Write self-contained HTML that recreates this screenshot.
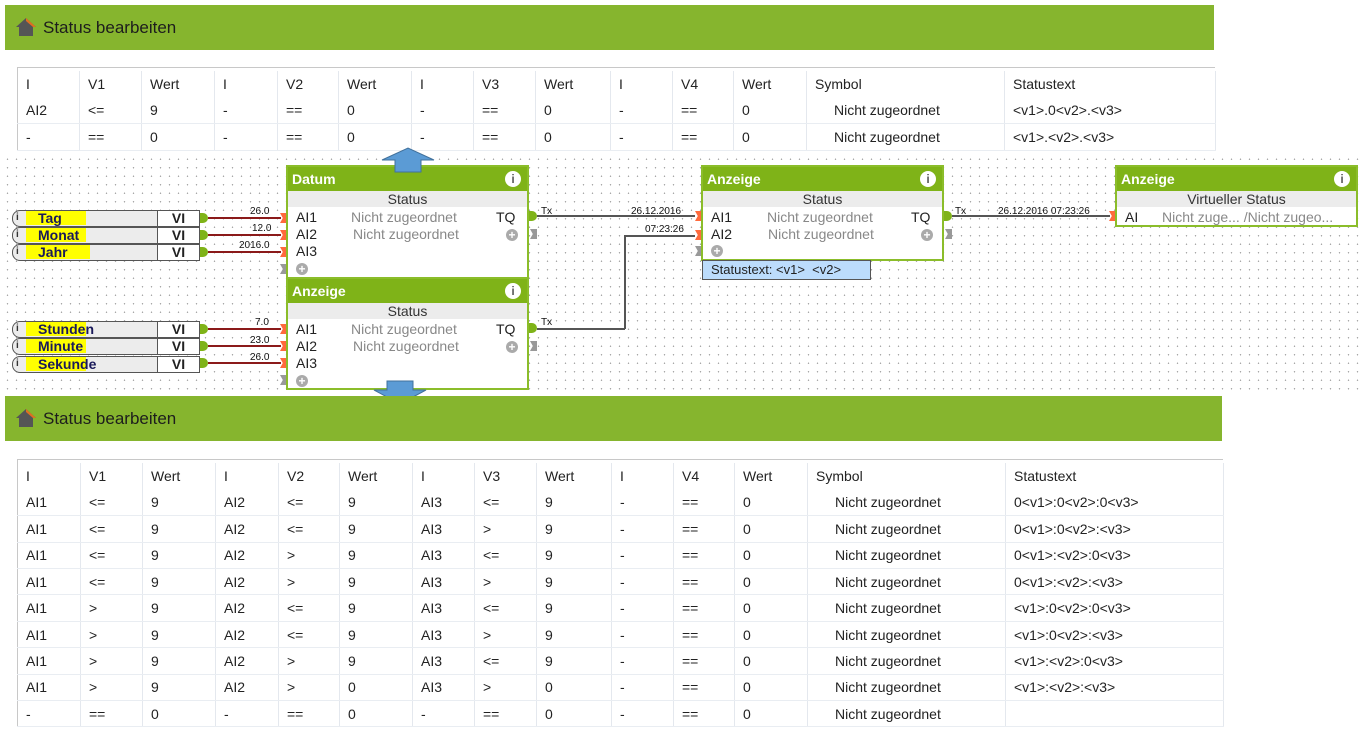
<!DOCTYPE html>
<html><head><meta charset="utf-8"><style>
*{margin:0;padding:0;box-sizing:border-box}
body{width:1368px;height:731px;background:#fff;position:relative;overflow:hidden;font-family:"Liberation Sans",sans-serif;color:#222}
.hdr{position:absolute;background:#86b52e;height:45px;font-size:17px;color:#1d1d1d;padding-left:38px;line-height:45px}
.hdr svg{position:absolute;left:10px;top:12px}
table{position:absolute;border-collapse:collapse;table-layout:fixed;font-size:14px}
td{height:26.4px;padding:0 0 0 8px;border-right:1px solid #e4e8ee;border-bottom:1px solid #e9edf2;white-space:nowrap;overflow:hidden}
tr:first-child td{border-bottom:none}
td.s{padding-left:27px}
.tb{position:absolute;border-top:1px solid #c8c8c8;border-left:1px solid #c8c8c8}
.cv{position:absolute;left:0;top:152px;width:1360px;height:243px;background-color:#fff;background-image:radial-gradient(circle,#a8a8a8 0.6px,transparent 0.9px);background-size:9px 8.5px;background-position:3px 3px}
.blk{position:absolute;border:2px solid #8bbd2a;background:#fff;font-size:14px}
.bh{background:#7fb318;color:#fff;font-weight:bold;height:24px;line-height:24px;padding-left:4px;font-size:14px;position:relative;font-family:"Liberation Sans Narrow","Liberation Sans",sans-serif}
.bh i{position:absolute;right:6px;top:4px;width:16px;height:16px;border-radius:50%;background:#fff;color:#5c5c5c;font-style:normal;font-size:12px;line-height:16px;text-align:center}
.st{background:#ececec;text-align:center;height:16px;line-height:16px;color:#333}
.r{position:absolute;font-size:14px;line-height:17px}
.g{color:#888}
.pl{position:absolute;width:12px;height:12px;border-radius:50%;background:#aaa;color:#fff;font-size:12px;line-height:12px;text-align:center;font-weight:bold}
.in{position:absolute;height:17px;border:1.5px solid #555;border-radius:8px 0 0 8px;background:#ececec;font-size:14px;font-weight:bold;line-height:14px;font-family:"Liberation Sans Narrow","Liberation Sans",sans-serif}
.in .y{position:absolute;left:13px;top:0;height:14px;background:#ff0;padding-left:12px;color:#1a1a5a}
.in .ii{position:absolute;left:3px;top:0;font-size:10px;color:#333}
.in .vi{position:absolute;left:144px;top:-1.5px;width:43px;height:17px;border:1.5px solid #555;background:#fff;text-align:center;line-height:14px}
.gd{position:absolute;width:8px;height:10px;background:#7fb318;border-radius:0 5px 5px 0}
.od{position:absolute;width:7px;height:10px;background:#ff6a3d;clip-path:polygon(0 0,100% 0,100% 100%,0 100%,40% 50%)}
.gy{position:absolute;width:7px;height:10px;background:#999;clip-path:polygon(0 0,100% 0,100% 100%,0 100%,40% 50%)}
.lab{position:absolute;font-size:10px;line-height:10px;font-family:"Liberation Sans Narrow","Liberation Sans",sans-serif;color:#111}
.ln{position:absolute;height:2px;background:#8b1a1a}
.k{position:absolute;background:#555}
</style></head><body>

<div class="hdr" style="left:5px;top:5px;width:1209px"><svg width="22" height="20" viewBox="0 0 22 20"><path d="M11 1 L21 10 L18 10 L18 19 L4 19 L4 10 L1 10 Z" fill="#555"/><path d="M11 1 L21 10 L18 10 L11 4 Z" fill="#e07020"/></svg>Status bearbeiten</div>

<div class="tb" style="left:17px;top:67px;width:1198px;height:4px"></div>
<table style="left:17px;top:71px;width:1198px;border-left:1px solid #c8c8c8">
<colgroup><col style="width:62px"><col style="width:62px"><col style="width:73px"><col style="width:63px"><col style="width:61px"><col style="width:73px"><col style="width:62px"><col style="width:62px"><col style="width:75px"><col style="width:62px"><col style="width:61px"><col style="width:73px"><col style="width:198px"><col style="width:211px"></colgroup>
<tr><td>I</td><td>V1</td><td>Wert</td><td>I</td><td>V2</td><td>Wert</td><td>I</td><td>V3</td><td>Wert</td><td>I</td><td>V4</td><td>Wert</td><td>Symbol</td><td>Statustext</td></tr>
<tr><td>AI2</td><td>&lt;=</td><td>9</td><td>-</td><td>==</td><td>0</td><td>-</td><td>==</td><td>0</td><td>-</td><td>==</td><td>0</td><td class="s">Nicht zugeordnet</td><td>&lt;v1&gt;.0&lt;v2&gt;.&lt;v3&gt;</td></tr>
<tr><td>-</td><td>==</td><td>0</td><td>-</td><td>==</td><td>0</td><td>-</td><td>==</td><td>0</td><td>-</td><td>==</td><td>0</td><td class="s">Nicht zugeordnet</td><td>&lt;v1&gt;.&lt;v2&gt;.&lt;v3&gt;</td></tr>
</table>

<div class="cv"></div>

<div class="in" style="left:12px;top:210px;width:146px"><span class="ii">i</span><span class="y" style="width:60px">Tag</span><span class="vi">VI</span></div>
<div class="in" style="left:12px;top:227px;width:146px"><span class="ii">i</span><span class="y" style="width:60px">Monat</span><span class="vi">VI</span></div>
<div class="in" style="left:12px;top:244px;width:146px"><span class="ii">i</span><span class="y" style="width:64px">Jahr</span><span class="vi">VI</span></div>
<div class="in" style="left:12px;top:321px;width:146px"><span class="ii">i</span><span class="y" style="width:60px">Stunden</span><span class="vi">VI</span></div>
<div class="in" style="left:12px;top:338px;width:146px"><span class="ii">i</span><span class="y" style="width:60px">Minute</span><span class="vi">VI</span></div>
<div class="in" style="left:12px;top:356px;width:146px"><span class="ii">i</span><span class="y" style="width:60px">Sekunde</span><span class="vi">VI</span></div>

<div class="gd" style="left:200px;top:213px"></div><div class="gd" style="left:200px;top:230px"></div><div class="gd" style="left:200px;top:247px"></div>
<div class="gd" style="left:200px;top:324px"></div><div class="gd" style="left:200px;top:341px"></div><div class="gd" style="left:200px;top:358px"></div>
<div class="ln" style="left:208px;top:217px;width:73px"></div><div class="ln" style="left:208px;top:234px;width:73px"></div><div class="ln" style="left:208px;top:251px;width:73px"></div>
<div class="ln" style="left:208px;top:328px;width:73px"></div><div class="ln" style="left:208px;top:345px;width:73px"></div><div class="ln" style="left:208px;top:362px;width:73px"></div>
<div class="lab" style="left:250px;top:207px">26.0</div><div class="lab" style="left:252px;top:224px">12.0</div><div class="lab" style="left:239px;top:241px">2016.0</div>
<div class="lab" style="left:255px;top:318px">7.0</div><div class="lab" style="left:250px;top:336px">23.0</div><div class="lab" style="left:250px;top:353px">26.0</div>
<div class="od" style="left:280px;top:213px"></div><div class="od" style="left:280px;top:230px"></div><div class="od" style="left:280px;top:247px"></div><div class="gy" style="left:280px;top:264px"></div>
<div class="od" style="left:280px;top:324px"></div><div class="od" style="left:280px;top:341px"></div><div class="od" style="left:280px;top:358px"></div><div class="gy" style="left:280px;top:375px"></div>

<div class="blk" style="left:286px;top:165px;width:243px;height:114px"><div class="bh">Datum<i>i</i></div><div class="st">Status</div>
<div class="r" style="left:8px;top:42px">AI1</div><div class="r g" style="left:63px;top:42px">Nicht zugeordnet</div><div class="r" style="left:208px;top:42px">TQ</div>
<div class="r" style="left:8px;top:59px">AI2</div><div class="r g" style="left:65px;top:59px">Nicht zugeordnet</div><div class="pl" style="left:218px;top:62px">+</div>
<div class="r" style="left:8px;top:76px">AI3</div><div class="pl" style="left:8px;top:96px">+</div></div>

<div class="blk" style="left:286px;top:277px;width:243px;height:113px"><div class="bh">Anzeige<i>i</i></div><div class="st">Status</div>
<div class="r" style="left:8px;top:42px">AI1</div><div class="r g" style="left:63px;top:42px">Nicht zugeordnet</div><div class="r" style="left:208px;top:42px">TQ</div>
<div class="r" style="left:8px;top:59px">AI2</div><div class="r g" style="left:65px;top:59px">Nicht zugeordnet</div><div class="pl" style="left:218px;top:62px">+</div>
<div class="r" style="left:8px;top:76px">AI3</div><div class="pl" style="left:8px;top:96px">+</div></div>

<div class="gd" style="left:529px;top:211px"></div><div class="gy" style="left:530px;top:229px"></div>
<div class="gd" style="left:529px;top:323px"></div><div class="gy" style="left:530px;top:341px"></div>
<div class="lab" style="left:541px;top:207px">Tx</div><div class="lab" style="left:541px;top:318px">Tx</div>
<div class="k" style="left:537px;top:215px;width:158px;height:1.5px"></div>
<div class="k" style="left:537px;top:328px;width:88px;height:1.5px"></div>
<div class="k" style="left:624px;top:235px;width:1.5px;height:94px"></div>
<div class="k" style="left:624px;top:235px;width:71px;height:1.5px"></div>
<div class="lab" style="left:631px;top:207px">26.12.2016</div><div class="lab" style="left:645px;top:225px">07:23:26</div>
<div class="od" style="left:695px;top:211px"></div><div class="od" style="left:695px;top:230px"></div><div class="gy" style="left:695px;top:246px"></div>

<div class="blk" style="left:701px;top:165px;width:243px;height:96px"><div class="bh">Anzeige<i>i</i></div><div class="st">Status</div>
<div class="r" style="left:8px;top:42px">AI1</div><div class="r g" style="left:64px;top:42px">Nicht zugeordnet</div><div class="r" style="left:208px;top:42px">TQ</div>
<div class="r" style="left:8px;top:59px">AI2</div><div class="r g" style="left:65px;top:59px">Nicht zugeordnet</div><div class="pl" style="left:218px;top:62px">+</div>
<div class="pl" style="left:8px;top:78px">+</div></div>
<div style="position:absolute;left:702px;top:260px;width:169px;height:20px;background:#bcdcfc;border:1.5px solid #555;font-size:13px;line-height:17px;padding-left:8px">Statustext: &lt;v1&gt;&nbsp; &lt;v2&gt;</div>
<div class="gd" style="left:944px;top:211px"></div><div class="gy" style="left:945px;top:229px"></div>
<div class="lab" style="left:955px;top:207px">Tx</div>
<div class="k" style="left:952px;top:215px;width:158px;height:1.5px"></div>
<div class="lab" style="left:998px;top:207px">26.12.2016 07:23:26</div>
<div class="od" style="left:1109px;top:211px"></div>

<div class="blk" style="left:1115px;top:165px;width:243px;height:62px"><div class="bh">Anzeige<i>i</i></div><div class="st">Virtueller Status</div>
<div class="r" style="left:8px;top:42px">AI</div><div class="r g" style="left:45px;top:42px">Nicht zuge... /Nicht zugeo...</div></div>

<svg style="position:absolute;left:380px;top:146px" width="56" height="28"><path d="M2 14 L28 2 L54 14 L41 14 L41 26 L15 26 L15 14 Z" fill="#5b9bd5" stroke="#41719c" stroke-width="1"/></svg>
<svg style="position:absolute;left:372px;top:380px" width="56" height="26"><path d="M15 1 L41 1 L41 10 L54 10 L28 24 L2 10 L15 10 Z" fill="#5b9bd5" stroke="#41719c" stroke-width="1"/></svg>

<div class="hdr" style="left:5px;top:396px;width:1217px"><svg width="22" height="20" viewBox="0 0 22 20"><path d="M11 1 L21 10 L18 10 L18 19 L4 19 L4 10 L1 10 Z" fill="#555"/><path d="M11 1 L21 10 L18 10 L11 4 Z" fill="#e07020"/></svg>Status bearbeiten</div>

<div class="tb" style="left:17px;top:459px;width:1206px;height:4px"></div>
<table style="left:17px;top:463px;width:1206px;border-left:1px solid #c8c8c8">
<colgroup><col style="width:63px"><col style="width:62px"><col style="width:73px"><col style="width:63px"><col style="width:61px"><col style="width:73px"><col style="width:62px"><col style="width:62px"><col style="width:75px"><col style="width:62px"><col style="width:61px"><col style="width:73px"><col style="width:198px"><col style="width:218px"></colgroup>
<tr><td>I</td><td>V1</td><td>Wert</td><td>I</td><td>V2</td><td>Wert</td><td>I</td><td>V3</td><td>Wert</td><td>I</td><td>V4</td><td>Wert</td><td>Symbol</td><td>Statustext</td></tr>
<tr><td>AI1</td><td>&lt;=</td><td>9</td><td>AI2</td><td>&lt;=</td><td>9</td><td>AI3</td><td>&lt;=</td><td>9</td><td>-</td><td>==</td><td>0</td><td class="s">Nicht zugeordnet</td><td>0&lt;v1&gt;:0&lt;v2&gt;:0&lt;v3&gt;</td></tr>
<tr><td>AI1</td><td>&lt;=</td><td>9</td><td>AI2</td><td>&lt;=</td><td>9</td><td>AI3</td><td>&gt;</td><td>9</td><td>-</td><td>==</td><td>0</td><td class="s">Nicht zugeordnet</td><td>0&lt;v1&gt;:0&lt;v2&gt;:&lt;v3&gt;</td></tr>
<tr><td>AI1</td><td>&lt;=</td><td>9</td><td>AI2</td><td>&gt;</td><td>9</td><td>AI3</td><td>&lt;=</td><td>9</td><td>-</td><td>==</td><td>0</td><td class="s">Nicht zugeordnet</td><td>0&lt;v1&gt;:&lt;v2&gt;:0&lt;v3&gt;</td></tr>
<tr><td>AI1</td><td>&lt;=</td><td>9</td><td>AI2</td><td>&gt;</td><td>9</td><td>AI3</td><td>&gt;</td><td>9</td><td>-</td><td>==</td><td>0</td><td class="s">Nicht zugeordnet</td><td>0&lt;v1&gt;:&lt;v2&gt;:&lt;v3&gt;</td></tr>
<tr><td>AI1</td><td>&gt;</td><td>9</td><td>AI2</td><td>&lt;=</td><td>9</td><td>AI3</td><td>&lt;=</td><td>9</td><td>-</td><td>==</td><td>0</td><td class="s">Nicht zugeordnet</td><td>&lt;v1&gt;:0&lt;v2&gt;:0&lt;v3&gt;</td></tr>
<tr><td>AI1</td><td>&gt;</td><td>9</td><td>AI2</td><td>&lt;=</td><td>9</td><td>AI3</td><td>&gt;</td><td>9</td><td>-</td><td>==</td><td>0</td><td class="s">Nicht zugeordnet</td><td>&lt;v1&gt;:0&lt;v2&gt;:&lt;v3&gt;</td></tr>
<tr><td>AI1</td><td>&gt;</td><td>9</td><td>AI2</td><td>&gt;</td><td>9</td><td>AI3</td><td>&lt;=</td><td>9</td><td>-</td><td>==</td><td>0</td><td class="s">Nicht zugeordnet</td><td>&lt;v1&gt;:&lt;v2&gt;:0&lt;v3&gt;</td></tr>
<tr><td>AI1</td><td>&gt;</td><td>9</td><td>AI2</td><td>&gt;</td><td>0</td><td>AI3</td><td>&gt;</td><td>0</td><td>-</td><td>==</td><td>0</td><td class="s">Nicht zugeordnet</td><td>&lt;v1&gt;:&lt;v2&gt;:&lt;v3&gt;</td></tr>
<tr><td>-</td><td>==</td><td>0</td><td>-</td><td>==</td><td>0</td><td>-</td><td>==</td><td>0</td><td>-</td><td>==</td><td>0</td><td class="s">Nicht zugeordnet</td><td></td></tr>
</table>
</body></html>
